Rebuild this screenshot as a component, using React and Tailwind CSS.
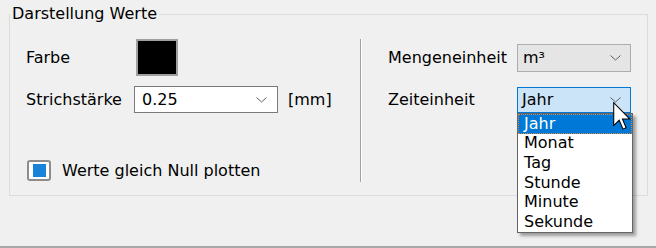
import React from "react";

function Chevron({ className = "" }) {
  return (
    <svg width="11" height="6" viewBox="0 0 11 6" className={className}>
      <polyline points="0.5,0.5 5.5,5 10.5,0.5" fill="none" stroke="#606060" strokeWidth="1" />
    </svg>
  );
}

export default function App() {
  const items = ["Jahr", "Monat", "Tag", "Stunde", "Minute", "Sekunde"];
  return (
    <div
      className="relative w-[656px] h-[248px] bg-[#f0f0f0] text-black text-[16px] overflow-hidden flex flex-col"
      style={{ fontFamily: '"DejaVu Sans", Verdana, sans-serif' }}
    >
      <fieldset className="ml-[9px] mt-[6px] w-[639px] h-[190px] border border-[#dcdcdc]">
        <legend className="px-[2px] leading-[16px]">Darstellung Werte</legend>
        <div className="flex">
          {/* left column */}
          <div className="w-[350px] pl-[16px] flex flex-col">
            <div className="mt-[17px] h-[37px] flex items-center">
              <span className="w-[110px] leading-[18px]">Farbe</span>
              <div className="w-[42px] h-[37px] border-2 border-[#a0a0a0] bg-black" />
            </div>
            <div className="mt-[10px] h-[27px] flex items-center">
              <span className="w-[108px] leading-[18px]">Strichstärke</span>
              <div className="w-[144px] h-[27px] border border-[#7a7a7a] bg-white flex items-center pl-[7px] pr-[10px]">
                <span className="flex-1 leading-[18px]">0.25</span>
                <Chevron />
              </div>
              <span className="ml-[10px] leading-[18px]">[mm]</span>
            </div>
            <div className="mt-[47px] h-[21px] flex items-center">
              <div className="ml-[1px] w-[24px] h-[21px] border-2 border-[#8c8c8c] rounded-[3px] bg-white flex items-center justify-center">
                <div className="w-[13px] h-[13px] bg-[#1883d7]" />
              </div>
              <span className="ml-[11px] leading-[18px]">Werte gleich Null plotten</span>
            </div>
          </div>
          {/* separator */}
          <div className="mt-[17px] h-[143px] w-[2px] border-l border-l-[#a0a0a0] border-r border-r-white" />
          {/* right column */}
          <div className="pl-[26px] flex flex-col">
            <div className="mt-[22px] h-[28px] flex items-center">
              <span className="w-[129px] leading-[18px]">Mengeneinheit</span>
              <div className="w-[114px] h-[28px] border border-[#adadad] bg-[#e5e5e5] flex items-center pl-[5px] pr-[9px]">
                <span className="flex-1 leading-[18px]">m³</span>
                <Chevron />
              </div>
            </div>
            <div className="mt-[15px] h-[26px] flex items-center">
              <span className="w-[129px] leading-[18px]">Zeiteinheit</span>
              <div className="w-[114px] h-[26px] border border-[#0078d7] bg-[#cce4f7] flex items-center pl-[4px] pr-[9px]">
                <span className="flex-1 leading-[18px]">Jahr</span>
                <Chevron />
              </div>
            </div>
          </div>
        </div>
      </fieldset>
      <div className="mt-auto h-[2px] bg-[#a8a8a8]" />

      {/* open dropdown list */}
      <div className="absolute left-[517px] top-[113px] w-[116px] h-[120px] bg-white border border-[#646464] shadow-[3px_3px_3px_rgba(0,0,0,0.35)] flex flex-col">
        {items.map((it, i) => (
          <div
            key={it}
            className={
              i === 0
                ? "h-[19.6px] leading-[18px] pl-[5px] flex items-center bg-[#0078d7] text-white border border-dotted border-[#d08a40]"
                : "h-[19.6px] leading-[18px] pl-[6px] flex items-center"
            }
          >
            {it}
          </div>
        ))}
      </div>

      {/* mouse cursor */}
      <svg className="absolute left-[613px] top-[102px]" width="18" height="28" viewBox="0 0 12.6 19.6">
        <path d="M0.5,0.5 L0.5,16.5 L4.3,12.8 L7,19 L9.2,18 L6.6,11.9 L11.8,11.9 Z" fill="white" stroke="black" strokeWidth="0.75" strokeLinejoin="miter" />
      </svg>
    </div>
  );
}
